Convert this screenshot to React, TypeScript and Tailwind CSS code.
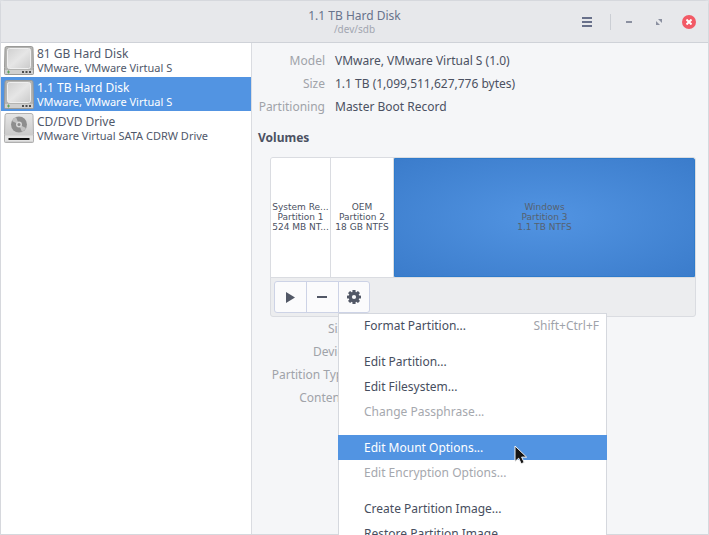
import React from "react";

type Drive = { name: string; model: string; kind: "disk" | "optical"; selected?: boolean };

const drives: Drive[] = [
  { name: "81 GB Hard Disk", model: "VMware, VMware Virtual S", kind: "disk" },
  { name: "1.1 TB Hard Disk", model: "VMware, VMware Virtual S", kind: "disk", selected: true },
  { name: "CD/DVD Drive", model: "VMware Virtual SATA CDRW Drive", kind: "optical" },
];

const driveInfo = [
  { label: "Model", value: "VMware, VMware Virtual S (1.0)" },
  { label: "Size", value: "1.1 TB (1,099,511,627,776 bytes)" },
  { label: "Partitioning", value: "Master Boot Record" },
];

const volumeLabels = ["Size", "Device", "Partition Type", "Contents"];

type MenuEntry = { label: string; accel?: string; disabled?: boolean; active?: boolean };

const menuGroups: MenuEntry[][] = [
  [{ label: "Format Partition...", accel: "Shift+Ctrl+F" }],
  [
    { label: "Edit Partition..." },
    { label: "Edit Filesystem..." },
    { label: "Change Passphrase...", disabled: true },
  ],
  [
    { label: "Edit Mount Options...", active: true },
    { label: "Edit Encryption Options...", disabled: true },
  ],
  [{ label: "Create Partition Image..." }, { label: "Restore Partition Image..." }],
];

function DiskIcon() {
  return (
    <svg width="32" height="32" viewBox="0 0 32 32" className="shrink-0" aria-hidden="true">
      <defs>
        <linearGradient id="diskTop" x1="0" y1="0" x2="1" y2="1">
          <stop offset="0" stopColor="#d0d0d0" />
          <stop offset="0.5" stopColor="#e6e6e6" />
          <stop offset="1" stopColor="#cacaca" />
        </linearGradient>
      </defs>
      <path d="M3.500 2.500h25q1.500 0 1.500 2l.5 19v6q0 1-1 1h-27q-1 0-1-1v-6l.5-19q0-2 1.500-2z" fill="#b4b4b2" stroke="#9a9a98" />
      <rect x="4.500" y="4.500" width="23" height="20" rx="2" fill="url(#diskTop)" stroke="#efefef" />
      <path d="M2 26h28v4h-28z" fill="#cfcfcf" />
      <path d="M4 28h3M5.500 26.500v3" stroke="#5fa35a" />
      <path d="M19 28h2M22.500 28h2M26 28h2" stroke="#4c4c4c" strokeWidth="2" />
    </svg>
  );
}

function OpticalIcon() {
  return (
    <svg width="32" height="32" viewBox="0 0 32 32" className="shrink-0" aria-hidden="true">
      <defs>
        <linearGradient id="opticalBody" x1="0" y1="0" x2="0" y2="1">
          <stop offset="0" stopColor="#e6e6e6" />
          <stop offset="1" stopColor="#c0c0c0" />
        </linearGradient>
      </defs>
      <path d="M4 1.500h24q2 0 2 2l.5 19v7q0 1-1 1h-27q-1 0-1-1v-7l.5-19q0-2 2-2z" fill="url(#opticalBody)" stroke="#b0b0b0" />
      <path d="M2 23.500h28v6h-28z" fill="#e2e2e2" />
      <circle cx="16" cy="12.500" r="8" fill="#8e8e8e" />
      <path d="M16 12.500L9 9A8 8 0 0 1 13 5.100zM16 12.500l7 3.500a8 8 0 0 1-4 3.900z" fill="#c2c2c2" />
      <circle cx="16" cy="12.500" r="3" fill="#d8d8d8" />
      <circle cx="16" cy="12.500" r="1.500" fill="#8a8a8a" />
      <path d="M5.500 27h21" stroke="#101010" strokeWidth="2" />
    </svg>
  );
}

function GearIcon() {
  return (
    <svg width="14" height="14" viewBox="0 0 14 14" aria-hidden="true">
      <g fill="#525866">
        <rect x="5.400" y="0" width="3.200" height="14" rx=".6" />
        <rect x="5.400" y="0" width="3.200" height="14" rx=".6" transform="rotate(45 7 7)" />
        <rect x="5.400" y="0" width="3.200" height="14" rx=".6" transform="rotate(90 7 7)" />
        <rect x="5.400" y="0" width="3.200" height="14" rx=".6" transform="rotate(135 7 7)" />
        <circle cx="7" cy="7" r="5.300" />
      </g>
      <circle cx="7" cy="7" r="2.100" fill="#fbfbfc" />
    </svg>
  );
}

function Header() {
  return (
    <header className="grid h-[42px] shrink-0 grid-cols-[1fr_auto_1fr] items-center border-b border-[#cfd2d8] bg-[#e7e8eb] pr-3 pl-3">
      <div className="col-start-2 flex flex-col items-center pt-px">
        <h1 className="text-[12px] leading-[14px] text-[#68738c]">1.1 TB Hard Disk</h1>
        <p className="text-[10px] leading-[13px] text-[#a2a6b0]">/dev/sdb</p>
      </div>
      <div className="flex items-center justify-end">
        <button aria-label="Menu" className="flex h-6 w-6 items-center justify-center">
          <svg width="10" height="10" viewBox="0 0 10 10" aria-hidden="true">
            <path d="M0 1h10M0 5h10M0 9h10" stroke="#68708a" strokeWidth="2" />
          </svg>
        </button>
        <div className="mr-2 ml-[11px] h-4 w-px bg-[#cbced4]" />
        <button aria-label="Minimize" className="flex h-5 w-5 items-center justify-center">
          <svg width="6" height="2" aria-hidden="true">
            <path d="M0 1h6" stroke="#8b90a0" strokeWidth="2" />
          </svg>
        </button>
        <button aria-label="Maximize" className="ml-[10px] flex h-5 w-5 items-center justify-center">
          <svg width="6" height="6" viewBox="0 0 6 6" aria-hidden="true">
            <path d="M2 0h4v4zM0 2v4h4z" fill="#8b90a0" />
          </svg>
        </button>
        <button aria-label="Close" className="ml-[13px] flex h-[14px] w-[14px] items-center justify-center rounded-full bg-[#f25a66]">
          <svg width="6" height="6" viewBox="0 0 6 6" aria-hidden="true">
            <path d="M.5 .5l5 5M5.500 .5l-5 5" stroke="#fff" strokeWidth="2" />
          </svg>
        </button>
      </div>
    </header>
  );
}

function Sidebar() {
  return (
    <nav className="w-[251px] shrink-0 border-r border-[#dadce1] bg-white">
      {drives.map((d) => (
        <button
          key={d.name}
          className={`flex h-[34px] w-full items-center gap-[2px] pl-[2px] text-left ${
            d.selected ? "bg-[#5294e2] text-white" : "text-[#50586a]"
          }`}
        >
          {d.kind === "disk" ? <DiskIcon /> : <OpticalIcon />}
          <span className="flex flex-col">
            <span className="text-[12px] leading-[14px]">{d.name}</span>
            <span className="text-[11px] leading-[13px]">{d.model}</span>
          </span>
        </button>
      ))}
    </nav>
  );
}

function PartitionMenu() {
  return (
    <div
      role="menu"
      className="absolute top-8 left-0 z-10 flex w-[269px] flex-col gap-[11px] border border-[#d5d8de] bg-white"
    >
      {menuGroups.map((group, i) => (
        <div key={i} className="first:-mt-px">
          {group.map((item) => (
            <button
              key={item.label}
              role="menuitem"
              disabled={item.disabled}
              className={`-mx-px flex h-[25px] w-[269px] items-center justify-between pr-2 pl-[26px] text-[12px] leading-4 ${
                item.active ? "bg-[#5294e2] text-white" : item.disabled ? "text-[#a5a8ae]" : "text-[#474e5e]"
              }`}
            >
              <span>{item.label}</span>
              {item.accel && <span className="text-[#9fa3aa]">{item.accel}</span>}
            </button>
          ))}
        </div>
      ))}
    </div>
  );
}

function Volumes() {
  const cell = "flex flex-col justify-center pb-[2px] text-center";
  return (
    <div className="rounded-[3px] border border-[#dadce1] bg-[#ecedef]">
      <div className="flex h-[120px] border-b border-[#dadce1] font-['DejaVu_Sans',sans-serif] text-[9px] leading-[10px] text-[#4b5162]">
        <button className={`${cell} w-[60px] rounded-tl-[2px] border-r border-[#dadce1] bg-white`}>
          <span>System Re...</span>
          <span>Partition 1</span>
          <span>524 MB NT...</span>
        </button>
        <button className={`${cell} w-[63px] items-center border-r border-[#dadce1] bg-white`}>
          <span>OEM</span>
          <span>Partition 2</span>
          <span>18 GB NTFS</span>
        </button>
        <button
          className={`${cell} flex-1 items-center rounded-tr-[2px] border border-[#2f7bcb] bg-[radial-gradient(ellipse_at_center,#5294e2,#3b7ccb)] text-[#56616f]`}
        >
          <span>Windows</span>
          <span>Partition 3</span>
          <span>1.1 TB NTFS</span>
        </button>
      </div>
      <div className="flex p-[3px]">
        <div className="relative flex">
          <button aria-label="Mount" className="flex h-8 w-[33px] items-center justify-center rounded-l-[3px] border border-[#cdd3e6] bg-[#fbfbfc]">
            <svg width="9" height="11" viewBox="0 0 9 11" aria-hidden="true">
              <path d="M0 0L9 5.500L0 11z" fill="#525866" />
            </svg>
          </button>
          <button aria-label="Delete partition" className="-ml-px flex h-8 w-[33px] items-center justify-center border border-[#cdd3e6] bg-[#fbfbfc]">
            <svg width="11" height="2" aria-hidden="true">
              <path d="M0 1h10" stroke="#525866" strokeWidth="2" />
            </svg>
          </button>
          <div className="relative -ml-px">
            <button aria-label="Partition options" aria-haspopup="menu" className="flex h-8 w-8 items-center justify-center rounded-r-[3px] border border-[#cdd3e6] bg-[#fbfbfc]">
              <GearIcon />
            </button>
            <PartitionMenu />
            <svg width="14" height="20" viewBox="0 0 14 20" className="absolute top-[164px] left-[176px] z-20" aria-hidden="true">
              <path d="M1 1v15.500l3.700-3.300 2.500 5.600 3-1.400-2.600-5.300h5z" fill="#141414" stroke="#f4f4f4" />
            </svg>
          </div>
        </div>
      </div>
    </div>
  );
}

export default function App() {
  return (
    <div className="flex h-screen flex-col overflow-hidden bg-[#dcdee2] font-['Noto_Sans','Open_Sans',sans-serif]">
      <div className="flex min-h-0 flex-1 flex-col rounded-t-[4px] border border-[#d6d8dd] bg-[#f5f6f8]">
        <Header />
        <div className="flex min-h-0 flex-1">
          <Sidebar />
          <main className="min-w-0 flex-1 pt-[6px] pr-3 pl-[6px] text-[12px]">
            <dl className="leading-[23px]">
              {driveInfo.map((row) => (
                <div key={row.label} className="flex gap-[10px]">
                  <dt className="w-[67px] text-right text-[#a0a3a9]">{row.label}</dt>
                  <dd className="text-[#4b5162]">{row.value}</dd>
                </div>
              ))}
            </dl>
            <h2 className="mt-2 font-bold leading-[23px] text-[#4b5162]">Volumes</h2>
            <div className="mt-2 pl-3">
              <Volumes />
              <dl className="leading-[23px]">
                {volumeLabels.map((label) => (
                  <div key={label}>
                    <dt className="w-20 whitespace-nowrap text-right text-[#a0a3a9]">{label}</dt>
                  </div>
                ))}
              </dl>
            </div>
          </main>
        </div>
      </div>
    </div>
  );
}
